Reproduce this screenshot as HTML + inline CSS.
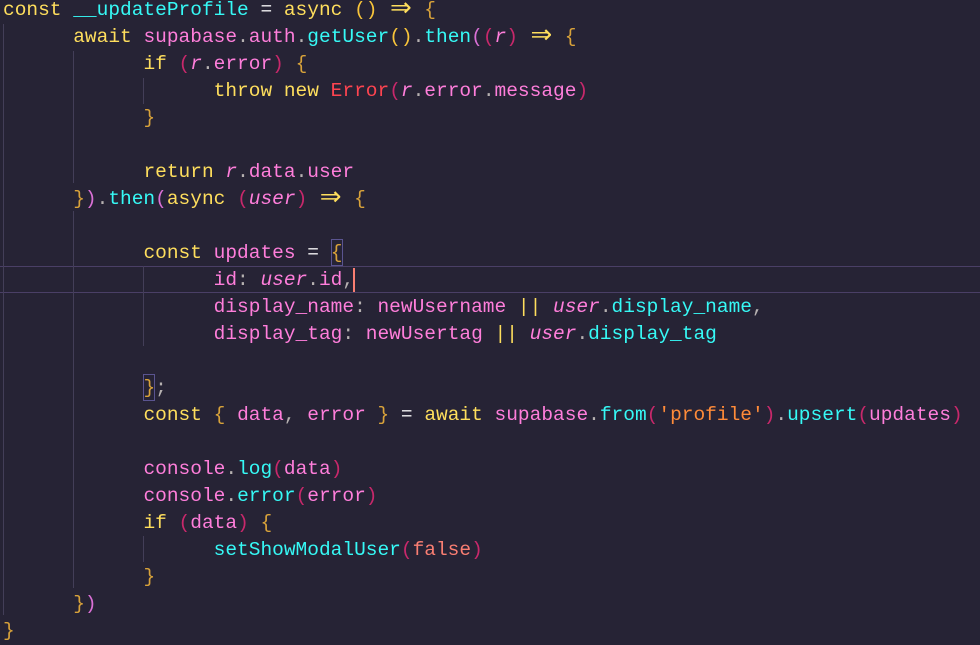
<!DOCTYPE html>
<html><head><meta charset="utf-8"><style>
html,body{margin:0;padding:0;background:#262335;width:980px;height:638px;overflow:hidden}
#c{position:absolute;left:3px;top:-3.5px;font-family:"Liberation Mono","DejaVu Sans Mono",monospace;font-size:19.5px;line-height:27px;white-space:pre;color:#f0eff1}
.k{color:#fede5d}.p{color:#ff7edb}.c{color:#36f9f6}.r{color:#fe4450}.i{color:#ff7edb;font-style:italic}
.d{color:#b6b1b1}.s{color:#ff8b39}.f{color:#f97e72}
.b1{color:#f8c43a}.b2{color:#da70d6}.b3{color:#c8286b}.br{color:#d8a23a}
.ar{color:#fede5d;display:inline-block;width:23.4px;text-align:center;font-family:"DejaVu Sans",sans-serif;font-size:26px;line-height:20px;vertical-align:top;margin-top:1px}
.g{position:absolute;width:1px;background:#433e58}
.hl{position:absolute;left:0;width:980px;height:25px;top:266px;border-top:1px solid #4a3f66;border-bottom:1px solid #4a3f66;box-sizing:content-box}
</style></head><body>
<div class="hl"></div>
<div class="g" style="left:3px;top:24px;height:591px"></div>
<div class="g" style="left:73px;top:51px;height:132px"></div>
<div class="g" style="left:73px;top:211px;height:377px"></div>
<div class="g" style="left:143px;top:78px;height:26px"></div>
<div class="g" style="left:143px;top:266px;height:80px"></div>
<div class="g" style="left:143px;top:536px;height:26px"></div>
<div style="position:absolute;left:331px;top:239px;width:10px;height:25px;border:1px solid #5a5490"></div>
<div style="position:absolute;left:143px;top:374px;width:10px;height:25px;border:1px solid #5a5490"></div>
<div style="position:absolute;left:353px;top:268px;width:2px;height:24px;background:#f97e72"></div>
<div id="c"><span class="k">const</span> <span class="c">__updateProfile</span> = <span class="k">async</span> <span class="b1">()</span> <span class="ar">⇒</span> <span class="br">{</span>
      <span class="k">await</span> <span class="p">supabase</span><span class="d">.</span><span class="p">auth</span><span class="d">.</span><span class="c">getUser</span><span class="b1">()</span><span class="d">.</span><span class="c">then</span><span class="b2">(</span><span class="b3">(</span><span class="i">r</span><span class="b3">)</span> <span class="ar">⇒</span> <span class="br">{</span>
            <span class="k">if</span> <span class="b3">(</span><span class="i">r</span><span class="d">.</span><span class="p">error</span><span class="b3">)</span> <span class="br">{</span>
                  <span class="k">throw</span> <span class="k">new</span> <span class="r">Error</span><span class="b3">(</span><span class="i">r</span><span class="d">.</span><span class="p">error</span><span class="d">.</span><span class="p">message</span><span class="b3">)</span>
            <span class="br">}</span>

            <span class="k">return</span> <span class="i">r</span><span class="d">.</span><span class="p">data</span><span class="d">.</span><span class="p">user</span>
      <span class="br">}</span><span class="b2">)</span><span class="d">.</span><span class="c">then</span><span class="b2">(</span><span class="k">async</span> <span class="b3">(</span><span class="i">user</span><span class="b3">)</span> <span class="ar">⇒</span> <span class="br">{</span>

            <span class="k">const</span> <span class="p">updates</span> = <span class="br">{</span>
                  <span class="p">id</span><span class="d">:</span> <span class="i">user</span><span class="d">.</span><span class="p">id</span><span class="d">,</span>
                  <span class="p">display_name</span><span class="d">:</span> <span class="p">newUsername</span> <span class="k">||</span> <span class="i">user</span><span class="d">.</span><span class="c">display_name</span><span class="d">,</span>
                  <span class="p">display_tag</span><span class="d">:</span> <span class="p">newUsertag</span> <span class="k">||</span> <span class="i">user</span><span class="d">.</span><span class="c">display_tag</span>

            <span class="br">}</span><span class="d">;</span>
            <span class="k">const</span> <span class="br">{</span> <span class="p">data</span><span class="d">,</span> <span class="p">error</span> <span class="br">}</span> = <span class="k">await</span> <span class="p">supabase</span><span class="d">.</span><span class="c">from</span><span class="b3">(</span><span class="s">'profile'</span><span class="b3">)</span><span class="d">.</span><span class="c">upsert</span><span class="b3">(</span><span class="p">updates</span><span class="b3">)</span>

            <span class="p">console</span><span class="d">.</span><span class="c">log</span><span class="b3">(</span><span class="p">data</span><span class="b3">)</span>
            <span class="p">console</span><span class="d">.</span><span class="c">error</span><span class="b3">(</span><span class="p">error</span><span class="b3">)</span>
            <span class="k">if</span> <span class="b3">(</span><span class="p">data</span><span class="b3">)</span> <span class="br">{</span>
                  <span class="c">setShowModalUser</span><span class="b3">(</span><span class="f">false</span><span class="b3">)</span>
            <span class="br">}</span>
      <span class="br">}</span><span class="b2">)</span>
<span class="br">}</span></div>
</body></html>
